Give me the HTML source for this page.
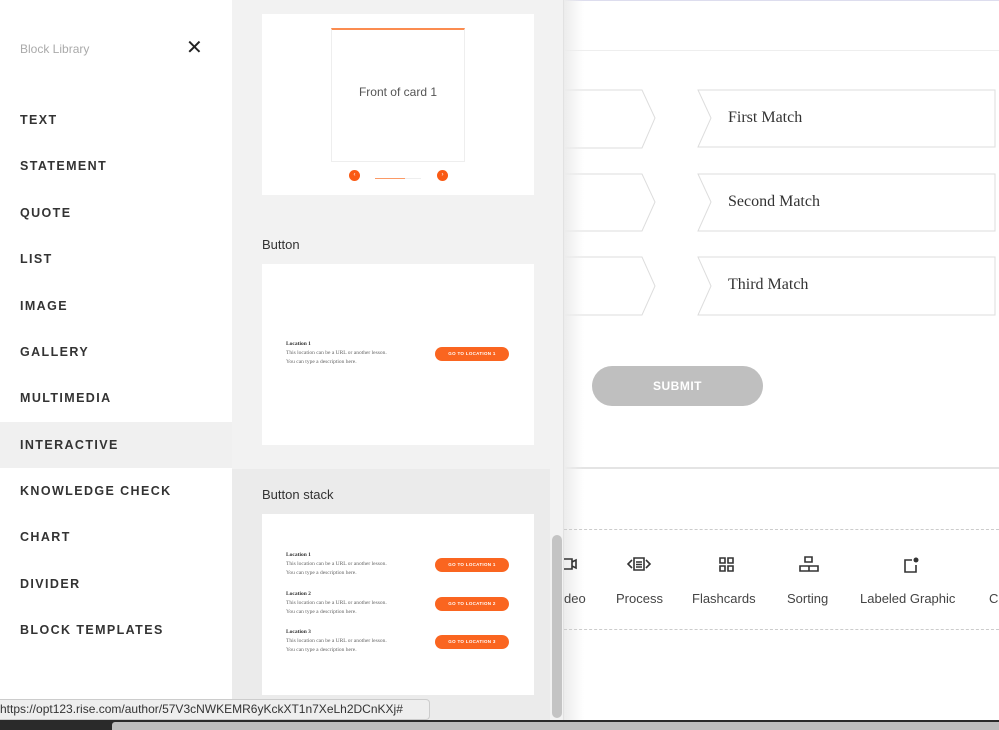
<!DOCTYPE html>
<html><head><style>
*{margin:0;padding:0;box-sizing:border-box}
body{width:999px;height:730px;overflow:hidden;position:relative;background:#fff;font-family:"Liberation Sans",sans-serif}
.left{position:absolute;left:0;top:0;width:232px;height:730px;background:#fff}
.left .t{position:absolute;left:20px;top:42px;font-size:12px;color:#aaa}
.nav{position:absolute;left:0;width:232px;height:46px;line-height:46px;padding-left:20px;font-size:12.5px;font-weight:bold;letter-spacing:1.4px;color:#333}
.mid{position:absolute;left:232px;top:0;width:332px;height:730px;background:#f2f2f2;border-right:1px solid #e2e2e2}
.card{position:absolute;left:30px;width:272px;background:#fff}
.lbl{position:absolute;left:30px;font-size:13px;color:#333}
.loc{position:absolute;left:24px;font-family:"Liberation Serif",serif;font-size:5.5px;color:#666;line-height:9px}
.loc b{color:#333}
.btn{position:absolute;left:173px;width:74px;height:14px;border-radius:7px;background:#fa6520;color:#fff;font-size:4.5px;font-weight:bold;text-align:center;line-height:14px;letter-spacing:.3px}
.right{position:absolute;left:564px;top:0;width:435px;height:730px;background:#fff}
.sh{position:absolute;left:0;top:0;width:20px;height:720px;background:linear-gradient(to right,#ececec,rgba(255,255,255,0))}
.m{position:absolute;font-family:"Liberation Serif",serif;font-size:16px;color:#333}
.it{position:absolute;top:591px;font-size:13px;color:#444;text-align:center}
</style></head><body>
<div class="left">
<div class="t">Block Library</div>
<div style="position:absolute;left:186px;top:40px;font-size:20px;color:#222;line-height:16px">✕</div>
<div class="nav" style="top:97px">TEXT</div>
<div class="nav" style="top:143px">STATEMENT</div>
<div class="nav" style="top:190px">QUOTE</div>
<div class="nav" style="top:236px">LIST</div>
<div class="nav" style="top:283px">IMAGE</div>
<div class="nav" style="top:329px">GALLERY</div>
<div class="nav" style="top:375px">MULTIMEDIA</div>
<div class="nav" style="top:422px;background:#f0f0f0">INTERACTIVE</div>
<div class="nav" style="top:468px">KNOWLEDGE CHECK</div>
<div class="nav" style="top:514px">CHART</div>
<div class="nav" style="top:561px">DIVIDER</div>
<div class="nav" style="top:607px">BLOCK TEMPLATES</div>
</div>
<div class="mid">
<div style="position:absolute;left:0;top:469px;width:318px;height:261px;background:#ebebeb"></div>
<div class="card" style="top:14px;height:181px">
<div style="position:absolute;left:69px;top:14px;width:134px;height:134px;border:1px solid #eee;border-top:2px solid #fb8c50;text-align:center;line-height:124px;font-size:12px;color:#555">Front of card 1</div>
<div style="position:absolute;left:87px;top:156px;width:11px;height:11px;border-radius:50%;background:#fa5a14;color:#fff;font-size:6px;text-align:center;line-height:11px">‹</div>
<div style="position:absolute;left:175px;top:156px;width:11px;height:11px;border-radius:50%;background:#fa5a14;color:#fff;font-size:6px;text-align:center;line-height:11px">›</div>
<div style="position:absolute;left:113px;top:164px;width:46px;height:1px;background:#eee"><div style="width:30px;height:1px;background:#fb9a66"></div></div>
</div>
<div class="lbl" style="top:237px">Button</div>
<div class="card" style="top:264px;height:181px">
<div class="loc" style="top:76px"><b>Location 1</b><br>This location can be a URL or another lesson.<br>You can type a description here.</div>
<div class="btn" style="top:83px">GO TO LOCATION 1</div>
</div>
<div class="lbl" style="top:487px">Button stack</div>
<div class="card" style="top:514px;height:181px">
<div class="loc" style="top:37px"><b>Location 1</b><br>This location can be a URL or another lesson.<br>You can type a description here.</div>
<div class="btn" style="top:44px">GO TO LOCATION 1</div>
<div class="loc" style="top:76px"><b>Location 2</b><br>This location can be a URL or another lesson.<br>You can type a description here.</div>
<div class="btn" style="top:83px">GO TO LOCATION 2</div>
<div class="loc" style="top:114px"><b>Location 3</b><br>This location can be a URL or another lesson.<br>You can type a description here.</div>
<div class="btn" style="top:121px">GO TO LOCATION 3</div>
</div>
<div style="position:absolute;left:320px;top:535px;width:10px;height:183px;border-radius:5px;background:#c4c4c4"></div>
</div>
<div class="right">
<div style="position:absolute;left:0;top:0;width:435px;height:1px;background:#dde"></div>
<div style="position:absolute;left:0;top:50px;width:435px;height:1px;background:#eee"></div>
<div style="position:absolute;left:0;top:467px;width:435px;height:2px;background:#e4e4e4"></div>
<svg style="position:absolute;left:0;top:0" width="435" height="330">
<g fill="#fff" stroke="#ddd" stroke-width="1">
<path d="M0 90H78L91 118L78 148H0"/><path d="M0 174H78L91 202L78 231H0"/><path d="M0 257H78L91 286L78 315H0"/>
<path d="M134 90H431V147H134L147 118Z"/><path d="M134 174H431V231H134L147 202Z"/><path d="M134 257H431V315H134L147 286Z"/>
</g></svg>
<div class="sh"></div>
<div class="m" style="left:164px;top:109px">First Match</div>
<div class="m" style="left:164px;top:193px">Second Match</div>
<div class="m" style="left:164px;top:276px">Third Match</div>
<div style="position:absolute;left:28px;top:366px;width:171px;height:40px;border-radius:20px;background:#bfbfbf;color:#fff;font-size:12px;font-weight:bold;letter-spacing:.5px;text-align:center;line-height:40px">SUBMIT</div>
<div style="position:absolute;left:0;top:529px;width:435px;border-top:1px dashed #ccc"></div>
<div style="position:absolute;left:0;top:629px;width:435px;border-top:1px dashed #ccc"></div>
<svg style="position:absolute;left:0;top:555px" width="435" height="22" fill="none" stroke="#333" stroke-width="1.6">
<path d="M0 4H8V14H0M8 7L12 5V13L8 11"/>
<path d="M68 5L64 9L68 13M82 5L86 9L82 13M70 3H80V15H70ZM72 7H78M72 9.5H78M72 12H78"/>
<path d="M156 3h5v5h-5zM164 3h5v5h-5zM156 11h5v5h-5zM164 11h5v5h-5z"/>
<path d="M241 2h7v5h-7zM236 11h9v5h-9zM245 11h9v5h-9z"/>
<path d="M348 5H341V17H352V10"/><circle cx="352" cy="5" r="2.5" fill="#333" stroke="none"/>
</svg>
<div class="it" style="left:0">deo</div>
<div class="it" style="left:52px">Process</div>
<div class="it" style="left:128px">Flashcards</div>
<div class="it" style="left:223px">Sorting</div>
<div class="it" style="left:296px">Labeled Graphic</div>
<div class="it" style="left:425px">C</div>
</div>
<div style="position:absolute;left:0;top:699px;width:430px;height:21px;background:#eee;border:1px solid #ccc;border-left:none;border-radius:0 4px 4px 0;font-size:12px;line-height:19px;color:#333;white-space:nowrap;overflow:hidden">https://opt123.rise.com/author/57V3cNWKEMR6yKckXT1n7XeLh2DCnKXj#</div>
<div style="position:absolute;left:0;top:720px;width:999px;height:10px;background:#2a2a2a"></div>
<div style="position:absolute;left:112px;top:722px;width:887px;height:8px;background:#bdbdbd;border-radius:3px 0 0 0"></div>
</body></html>
